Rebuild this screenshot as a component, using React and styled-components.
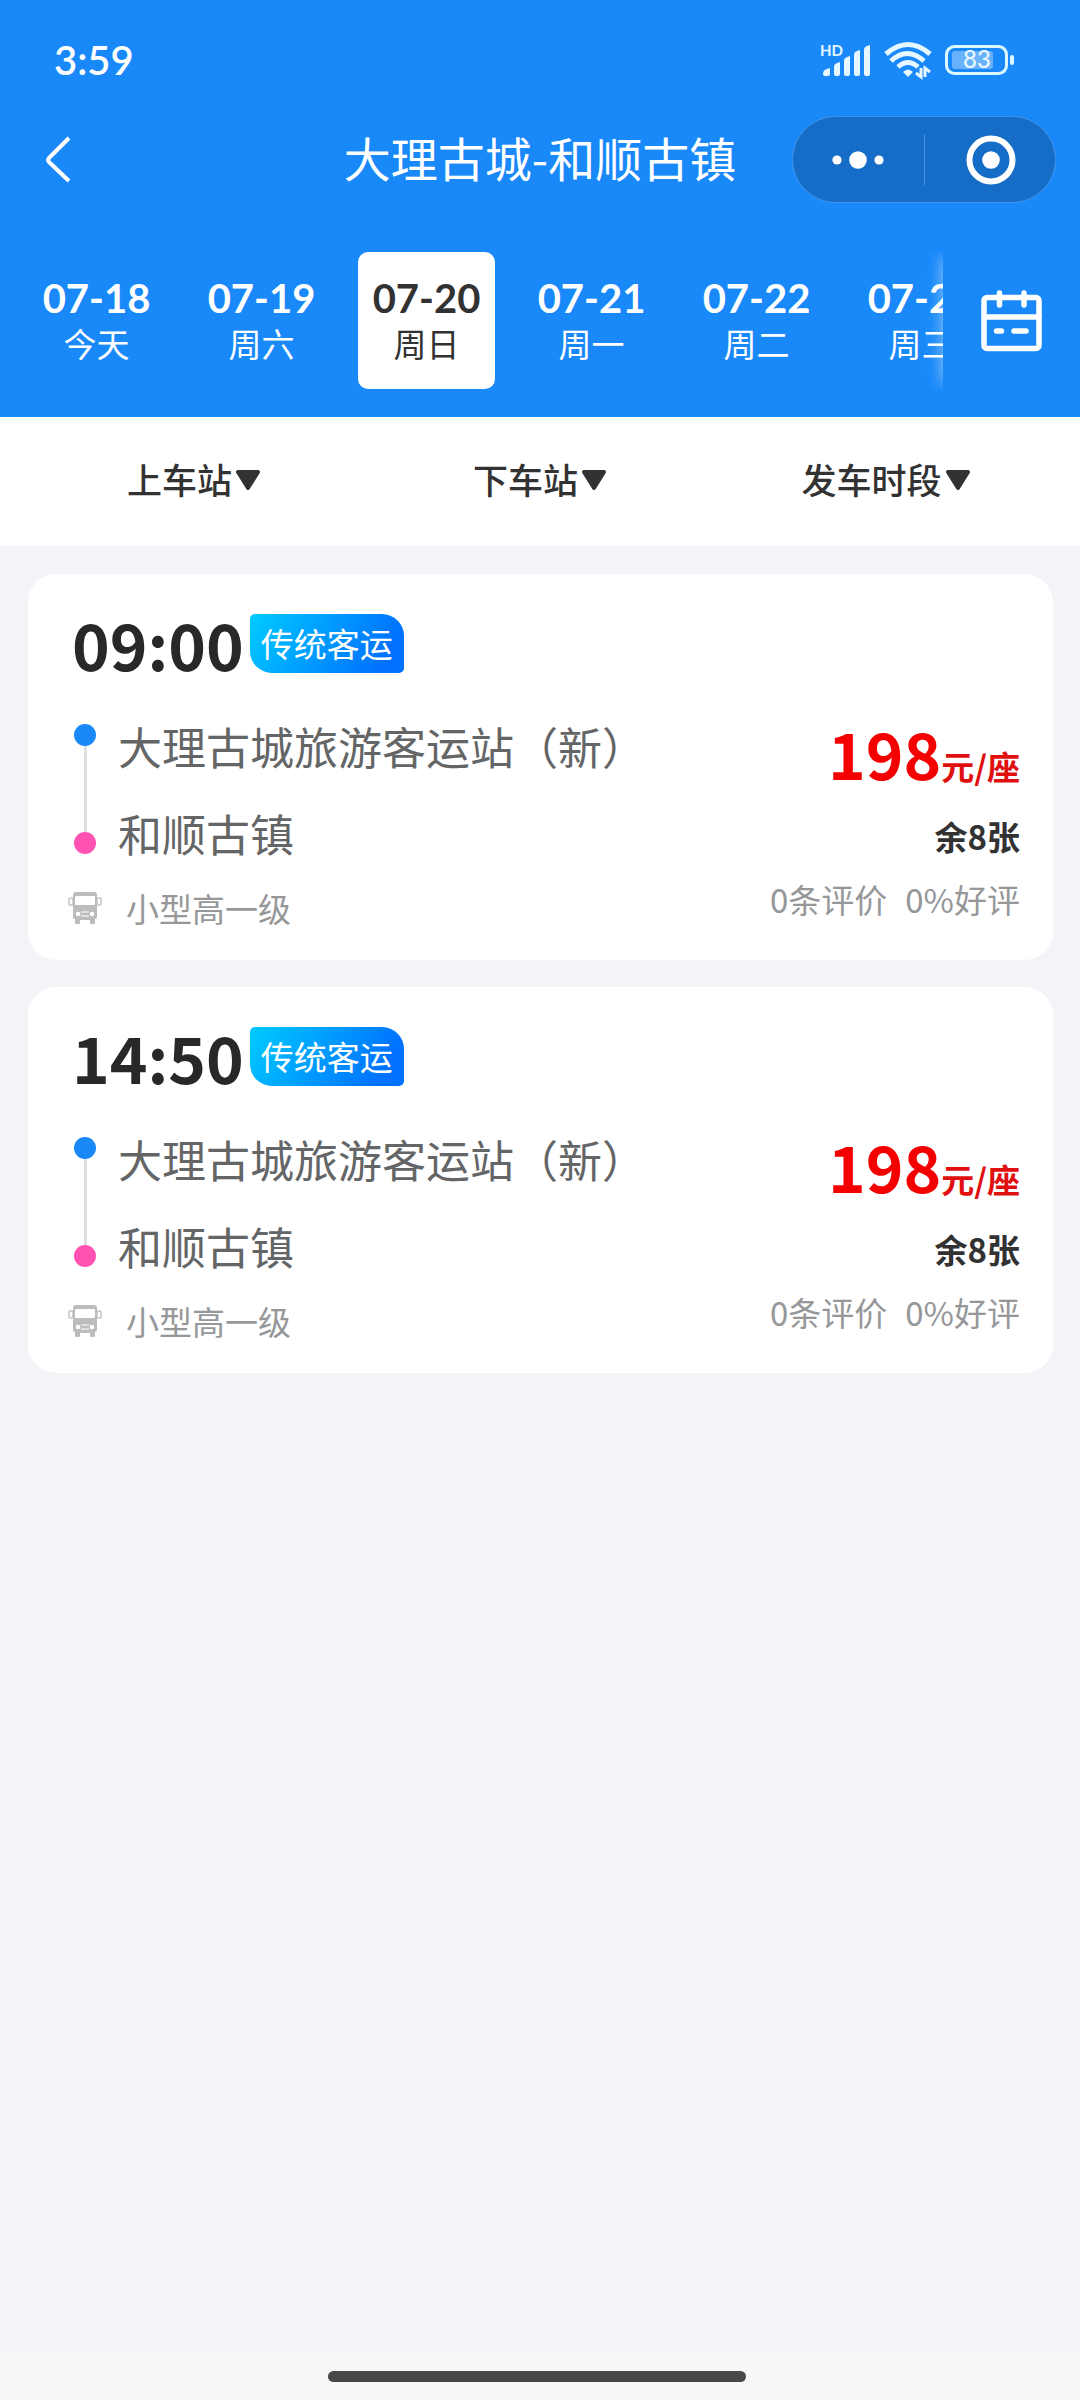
import React, { useState } from 'react';
import styled, { createGlobalStyle } from 'styled-components';

const GlobalStyle = createGlobalStyle`
  * {
    box-sizing: border-box;
  }

  body {
    margin: 0;
    background: #f2f4f8;
    color: #323233;
    font-family: "Noto Sans CJK SC", "Noto Sans", sans-serif;
  }

  button {
    margin: 0;
    padding: 0;
    border: 0;
    background: none;
    color: inherit;
    font: inherit;
    cursor: pointer;
  }

  svg {
    display: block;
    flex-shrink: 0;
    overflow: visible;
  }
`;

const Page = styled.div`
  display: flex;
  flex-direction: column;
  min-height: 100vh;
`;

const Header = styled.header`
  background: #1989fa;
  color: white;
`;

const StatusBar = styled.div`
  display: flex;
  justify-content: space-between;
  align-items: center;
  height: 116px;
  padding: 4px 65px 0 54px;
`;

const Clock = styled.span`
  font-family: Lato, sans-serif;
  font-size: 40px;
  font-weight: 600;
  line-height: 48px;
`;

const StatusIcons = styled.div`
  display: flex;
  align-items: center;
  gap: 14px;
`;

const NavBar = styled.div`
  display: grid;
  grid-template-columns: 1fr auto 1fr;
  align-items: center;
  padding: 0 24px;
`;

const BackButton = styled.button`
  justify-self: start;
  padding: 20px;
`;

const Title = styled.h1`
  margin: 0;
  padding-bottom: 6px;
  font-size: 47px;
  font-weight: 400;
  line-height: 80px;
`;

const Capsule = styled.div`
  display: flex;
  justify-self: end;
  align-items: center;
  width: 264px;
  height: 87px;
  border: 1px solid #4493e4;
  border-radius: 44px;
  background: #156dc8;
`;

const CapsuleButton = styled.button`
  display: flex;
  flex: 1;
  justify-content: center;
  align-items: center;
  height: 51px;
  border-left: ${(props) => (props.$divided ? '1px solid #4493e4' : '0')};
`;

const DateBar = styled.div`
  display: flex;
  padding: 49px 0 28px;
`;

const DateList = styled.div`
  display: flex;
  flex: 1;
  gap: 28px;
  min-width: 0;
  padding-left: 28px;
  overflow: hidden;
`;

const DateTab = styled.button`
  display: flex;
  flex-direction: column;
  flex-shrink: 0;
  align-items: center;
  width: 137px;
  height: 137px;
  padding-top: 23px;
  border-radius: 10px;
  background: ${(props) => (props.$active ? 'white' : 'transparent')};
  color: ${(props) => (props.$active ? '#323233' : 'white')};
`;

const DateText = styled.span`
  font-family: Lato, sans-serif;
  font-size: 40px;
  font-weight: 700;
  line-height: 46px;
`;

const WeekText = styled.span`
  font-size: 33px;
  line-height: 44px;
`;

// the light shadow falls only on the date list, so the other sides are clipped
const CalendarButton = styled.button`
  display: flex;
  justify-content: center;
  align-items: center;
  position: relative;
  width: 137px;
  background: #1989fa;
  box-shadow: -7px 0 14px -6px rgba(255, 255, 255, 0.5);
  clip-path: inset(0 0 0 -24px);
`;

const FilterBar = styled.div`
  display: grid;
  grid-template-columns: repeat(3, 1fr);
  height: 129px;
  padding: 0 21px 6px;
  background: white;
`;

const FilterButton = styled.button`
  display: flex;
  justify-content: center;
  align-items: center;
  gap: 3px;
  font-size: 35px;
  font-weight: 500;
`;

const TripList = styled.main`
  display: flex;
  flex: 1;
  flex-direction: column;
  gap: 27px;
  padding: 28px 27px 28px 28px;
`;

const Card = styled.article`
  padding: 36px 33px 21px 40px;
  border-radius: 28px;
  background: white;
`;

const CardHead = styled.div`
  display: flex;
  align-items: center;
  gap: 6px;
  height: 67px;
  margin-bottom: 26px;
  padding-left: 4px;
`;

const DepartTime = styled.span`
  color: #282828;
  font-size: 64px;
  font-weight: 700;
  line-height: 67px;
`;

const Badge = styled.span`
  padding: 0 11px;
  border-radius: 5px 22px;
  background: linear-gradient(120deg, #00c6ff 5%, #0072ff 85%);
  color: white;
  font-size: 33px;
  line-height: 59px;
`;

const CardBody = styled.div`
  display: flex;
  justify-content: space-between;
`;

const Route = styled.div`
  display: flex;
  gap: 16px;
`;

const Track = styled.div`
  display: flex;
  flex-direction: column;
  align-items: center;
  width: 34px;
  padding: 21px 0 23px;
`;

const Dot = styled.span`
  width: 22px;
  height: 22px;
  border-radius: 50%;
  background: ${(props) => props.$color};
`;

const TrackLine = styled.span`
  flex: 1;
  width: 3px;
  background: #dcdfe2;
`;

const Station = styled.div`
  color: #646566;
  font-size: 44px;
  line-height: 87px;
`;

const Vehicle = styled.div`
  display: flex;
  align-items: center;
  gap: 24px;
  color: #969799;
  font-size: 33px;
  line-height: 62px;
`;

const Summary = styled.div`
  display: flex;
  flex-direction: column;
  align-items: flex-end;
`;

const Price = styled.div`
  display: flex;
  align-items: baseline;
  color: #f50000;
  font-size: 64px;
  font-weight: 700;
  line-height: 98px;
`;

const PriceUnit = styled.span`
  color: #e01010;
  font-size: 33px;
  line-height: 44px;
`;

const Remaining = styled.div`
  font-size: 33px;
  font-weight: 700;
  line-height: 70px;
`;

const Reviews = styled.div`
  display: flex;
  gap: 18px;
  color: #969799;
  font-size: 33px;
  line-height: 56px;
`;

const HomeBar = styled.footer`
  display: flex;
  justify-content: center;
  align-items: center;
  height: 48px;
  padding-right: 6px;
  background: #f7f7f7;
`;

const HomeHandle = styled.span`
  width: 418px;
  height: 11px;
  border-radius: 6px;
  background: #484848;
`;

const dates = [
  { date: '07-18', week: '今天' },
  { date: '07-19', week: '周六' },
  { date: '07-20', week: '周日' },
  { date: '07-21', week: '周一' },
  { date: '07-22', week: '周二' },
  { date: '07-23', week: '周三' },
];

const filters = ['上车站', '下车站', '发车时段'];

const trips = [
  { time: '09:00', type: '传统客运', from: '大理古城旅游客运站（新）', to: '和顺古镇', vehicle: '小型高一级', price: 198, left: 8, reviews: 0, rate: 0 },
  { time: '14:50', type: '传统客运', from: '大理古城旅游客运站（新）', to: '和顺古镇', vehicle: '小型高一级', price: 198, left: 8, reviews: 0, rate: 0 },
];

const SignalIcon = () => (
  <svg width="51" height="35" viewBox="0 0 51 35" fill="#e6f7ff" aria-hidden="true">
    <text x="0" y="13" fontFamily="Lato, sans-serif" fontSize="15" fontWeight="700">HD</text>
    <path d="M3 31q0-4 4-5l3-1v6q0 2-2 2H5q-2 0-2-2z" />
    <path d="M14 24q0-3 3-4l3-1v12q0 2-2 2h-2q-2 0-2-2z" />
    <path d="M24 18q0-3 3-4l3-1v18q0 2-2 2h-2q-2 0-2-2z" />
    <path d="M34 12q0-3 3-4l3-1v24q0 2-2 2h-2q-2 0-2-2z" />
    <path d="M44 7q0-3 3-4l3-1v29q0 2-2 2h-2q-2 0-2-2z" />
  </svg>
);

const WifiIcon = () => (
  <svg width="46" height="36" viewBox="0 0 46 36" fill="none" stroke="#e6f7ff" aria-hidden="true">
    <path d="M1 12Q23-7 45 12" strokeWidth="5" />
    <path d="M6 19Q22 4 39 19" strokeWidth="5" />
    <path d="M13 25q10-9 20 0" strokeWidth="5" />
    <path d="M18 30q5-5 10 0l-5 5z" fill="#e6f7ff" stroke="none" />
    <path d="M36 26v9l-5-4M40 35v-9l5 4" strokeWidth="3" />
  </svg>
);

const BatteryIcon = () => (
  <svg width="70" height="32" viewBox="0 0 70 32" aria-hidden="true">
    <rect x="1.500" y="2.500" width="60" height="27" rx="8" fill="none" stroke="#dcf8ff" strokeWidth="3" />
    <rect x="7" y="7" width="41" height="18" rx="3" fill="#68b2fb" />
    <rect x="65" y="11" width="4" height="10" rx="2" fill="#dcf8ff" />
    <text x="32" y="24" textAnchor="middle" fill="#e6f7ff" fontFamily="Lato, sans-serif" fontSize="24" fontWeight="500">83</text>
  </svg>
);

const BackIcon = () => (
  <svg width="28" height="47" viewBox="0 0 28 47" fill="none" stroke="white" strokeWidth="4" aria-hidden="true">
    <path d="M25 2 5 22q-2 2 0 4l20 19" />
  </svg>
);

const MoreIcon = () => (
  <svg width="52" height="18" viewBox="0 0 52 18" fill="white" aria-hidden="true">
    <circle cx="5" cy="9" r="4.600" />
    <circle cx="26" cy="9" r="8.800" />
    <circle cx="47" cy="9" r="4.600" />
  </svg>
);

const CloseIcon = () => (
  <svg width="50" height="50" viewBox="0 0 50 50" aria-hidden="true">
    <circle cx="26" cy="25" r="21.500" fill="none" stroke="white" strokeWidth="6" />
    <circle cx="26" cy="25" r="8.800" fill="white" />
  </svg>
);

const CalendarIcon = () => (
  <svg width="62" height="63" viewBox="0 0 62 63" fill="none" stroke="white" strokeWidth="5.500" strokeLinecap="round" aria-hidden="true">
    <rect x="3" y="8.500" width="55" height="51" rx="3" />
    <path d="M18.500 4v12M43 4v12M4 28h54M15.500 42h5M33 42h12" />
  </svg>
);

const ArrowIcon = () => (
  <svg width="26" height="25" viewBox="0 0 26 25" aria-hidden="true">
    <path d="M3 6h20L13 22z" fill="#323233" stroke="#323233" strokeWidth="4" strokeLinejoin="round" />
  </svg>
);

const BusIcon = () => (
  <svg width="34" height="34" viewBox="0 0 34 34" aria-hidden="true">
    <rect x="1" y="7" width="4" height="7" rx="1" fill="none" stroke="#c4c4c4" strokeWidth="1.500" />
    <rect x="29" y="7" width="4" height="7" rx="1" fill="none" stroke="#c4c4c4" strokeWidth="1.500" />
    <path d="M8 1h18q3 0 3 3v22q0 2-2 2v4q0 1-1 1h-3q-1 0-1-1v-3H12v3q0 1-1 1H8q-1 0-1-1v-4q-2 0-2-2V4q0-3 3-3z" fill="#bcbcbc" />
    <rect x="7" y="5" width="20" height="9" rx="1" fill="white" />
    <circle cx="10" cy="23" r="2.300" fill="white" />
    <circle cx="24" cy="23" r="2.300" fill="white" />
    <path d="M13 21h8M13 25h8" stroke="white" />
  </svg>
);

const TripCard = ({ trip }) => (
  <Card>
    <CardHead>
      <DepartTime>{trip.time}</DepartTime>
      <Badge>{trip.type}</Badge>
    </CardHead>
    <CardBody>
      <div>
        <Route>
          <Track>
            <Dot $color="#1989fa" />
            <TrackLine />
            <Dot $color="#ff52b1" />
          </Track>
          <div>
            <Station>{trip.from}</Station>
            <Station>{trip.to}</Station>
          </div>
        </Route>
        <Vehicle>
          <BusIcon />
          <span>{trip.vehicle}</span>
        </Vehicle>
      </div>
      <Summary>
        <Price>
          <span>{trip.price}</span>
          <PriceUnit>元/座</PriceUnit>
        </Price>
        <Remaining>余{trip.left}张</Remaining>
        <Reviews>
          <span>{trip.reviews}条评价</span>
          <span>{trip.rate}%好评</span>
        </Reviews>
      </Summary>
    </CardBody>
  </Card>
);

const App = () => {
  const [activeDate, setActiveDate] = useState('07-20');

  return (
    <Page>
      <GlobalStyle />
      <Header>
        <StatusBar>
          <Clock>3:59</Clock>
          <StatusIcons>
            <SignalIcon />
            <WifiIcon />
            <BatteryIcon />
          </StatusIcons>
        </StatusBar>
        <NavBar>
          <BackButton type="button" aria-label="返回"><BackIcon /></BackButton>
          <Title>大理古城-和顺古镇</Title>
          <Capsule>
            <CapsuleButton type="button" aria-label="更多"><MoreIcon /></CapsuleButton>
            <CapsuleButton type="button" aria-label="关闭" $divided><CloseIcon /></CapsuleButton>
          </Capsule>
        </NavBar>
        <DateBar>
          <DateList>
            {dates.map(({ date, week }) => (
              <DateTab type="button" key={date} $active={date === activeDate} onClick={() => setActiveDate(date)}>
                <DateText>{date}</DateText>
                <WeekText>{week}</WeekText>
              </DateTab>
            ))}
          </DateList>
          <CalendarButton type="button" aria-label="选择日期"><CalendarIcon /></CalendarButton>
        </DateBar>
      </Header>
      <FilterBar>
        {filters.map((name) => (
          <FilterButton type="button" key={name} aria-haspopup="listbox">
            {name}
            <ArrowIcon />
          </FilterButton>
        ))}
      </FilterBar>
      <TripList>
        {trips.map((trip) => <TripCard key={trip.time} trip={trip} />)}
      </TripList>
      <HomeBar><HomeHandle /></HomeBar>
    </Page>
  );
};

export default App;
